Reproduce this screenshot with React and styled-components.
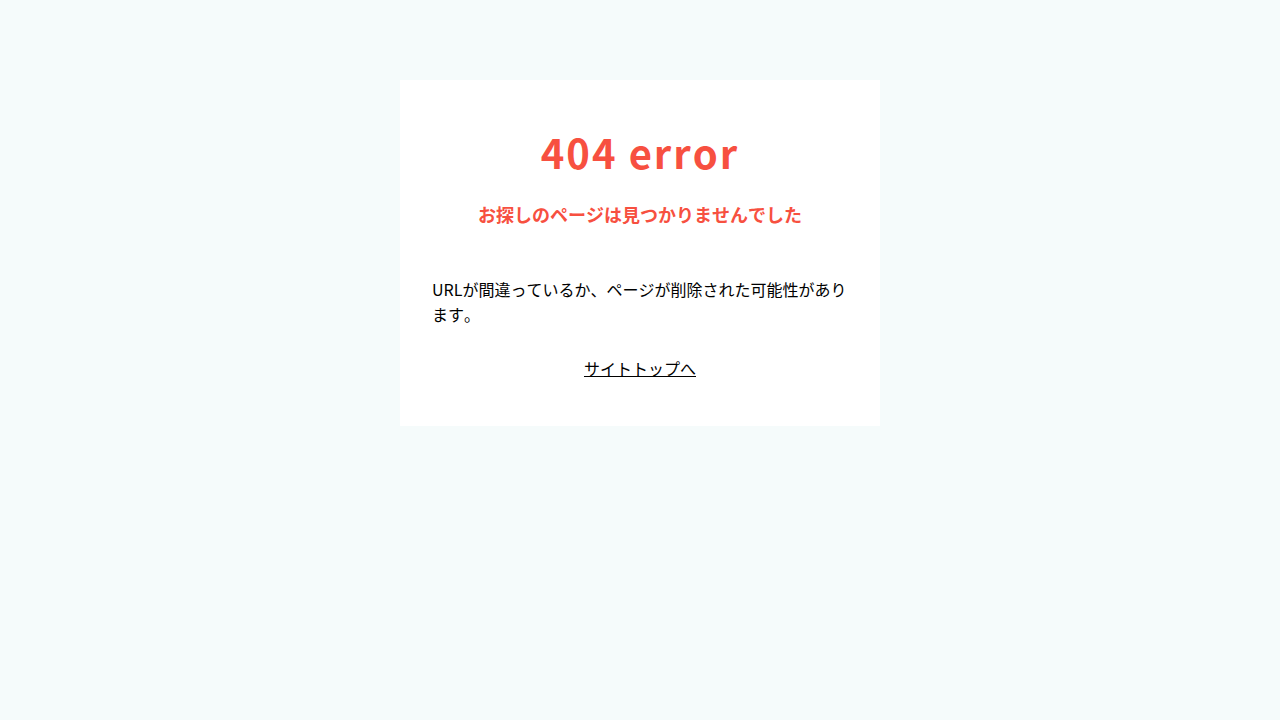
import React from "react";
import styled, { createGlobalStyle } from "styled-components";

const GlobalStyle = createGlobalStyle`
  *, *::before, *::after { box-sizing: border-box; }
  body {
    margin: 0;
    background: #f5fbfb;
    color: #000;
    font-family: "Noto Sans CJK JP", sans-serif;
    font-size: 16px;
    line-height: 25px;
    font-kerning: none;
  }
`;

const Page = styled.main`
  padding: 80px 16px;
`;

const Card = styled.section`
  max-width: 480px;
  margin: 0 auto;
  padding: 40px 32px 45px;
  background: #fff;
`;

const Title = styled.h1`
  margin: 0;
  color: #f75040;
  text-align: center;
  font-size: 40px;
  line-height: 64px;
  font-weight: 700;
  letter-spacing: 2px;
`;

const Subtitle = styled.p`
  margin: 16px 0 48px;
  color: #f75040;
  text-align: center;
  font-size: 18px;
  line-height: 29px;
  font-weight: 700;
`;

const Message = styled.p`
  margin: 0 0 29px;
`;

const LinkRow = styled.p`
  margin: 0;
  text-align: center;
`;

const TopLink = styled.a`
  color: inherit;
  text-decoration: underline;
`;

export default function App() {
  return (
    <>
      <GlobalStyle />
      <Page lang="ja">
        <Card>
          <Title>404 error</Title>
          <Subtitle>お探しのページは見つかりませんでした</Subtitle>
          <Message>URLが間違っているか、ページが削除された可能性があります。</Message>
          <LinkRow>
            <TopLink href="/">サイトトップへ</TopLink>
          </LinkRow>
        </Card>
      </Page>
    </>
  );
}
